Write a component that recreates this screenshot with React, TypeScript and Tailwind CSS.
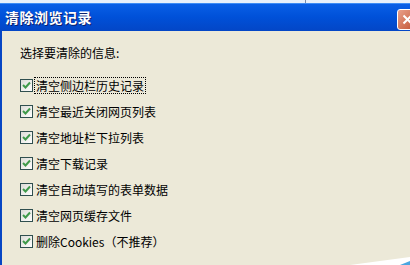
const items = [
  "清空侧边栏历史记录",
  "清空最近关闭网页列表",
  "清空地址栏下拉列表",
  "清空下载记录",
  "清空自动填写的表单数据",
  "清空网页缓存文件",
];

function Check({ focused = false, children }: { focused?: boolean; children: React.ReactNode }) {
  return (
    <div className="flex h-[26px] items-center">
      <span className="flex h-[13px] w-[13px] shrink-0 items-center justify-center border border-[#2f4f4f] bg-gradient-to-br from-[#dcdcd7] to-white">
        <svg width="9" height="9" viewBox="0 0 9 9">
          <path d="M1 4 L3.5 6.5 L8 1.5" fill="none" stroke="#3f9a4a" strokeWidth="2" />
        </svg>
      </span>
      <span
        className={
          "ml-[2px] px-[1px] leading-[15px] " +
          (focused ? "outline outline-1 outline-dotted outline-black" : "")
        }
      >
        {children}
      </span>
    </div>
  );
}

export default function App() {
  return (
    <div
      className="relative flex h-[265px] w-[410px] flex-col overflow-hidden bg-[#ece9d8] text-[12px] text-black"
      style={{ fontFamily: '"Noto Sans CJK SC", "Liberation Sans", sans-serif' }}
    >
      {/* strip above the window */}
      <div className="relative h-[3px] bg-[#e8f0fb]">
        <div className="absolute left-[305px] top-0 h-[3px] w-px bg-[#7a8aa8]" />
      </div>

      {/* title bar */}
      <div className="flex h-[28px] items-center justify-between border-t border-[#3d8cf5] bg-gradient-to-b from-[#0a5fe6] via-[#0050d8] to-[#0346c6] pl-[5px]">
        <span
          className="text-[14px] font-bold tracking-[0.5px] text-white"
          style={{ textShadow: "1px 1px 0 #0a1e6c" }}
        >
          清除浏览记录
        </span>
        <div className="mr-[-8px] mt-[4px] flex h-[21px] w-[21px] items-center justify-center rounded-[3px] border border-white bg-gradient-to-br from-[#e8a08a] to-[#c0502c]">
          <svg width="11" height="11" viewBox="0 0 11 11">
            <path d="M1.5 1.5 L9.5 9.5 M9.5 1.5 L1.5 9.5" stroke="#fff" strokeWidth="2" />
          </svg>
        </div>
      </div>

      {/* body */}
      <div className="flex flex-1 flex-col border-l-[2px] border-[#0746c4] pl-[18px] pt-[14px]">
        <div className="mb-[11px] leading-[16px]">选择要清除的信息:</div>
        <Check focused>{items[0]}</Check>
        {items.slice(1).map((t) => (
          <Check key={t}>{t}</Check>
        ))}
        <Check>删除Cookies（不推荐）</Check>
      </div>

      <svg className="absolute bottom-0 right-0" width="60" height="10" viewBox="0 0 60 10">
        <polygon points="0,10 60,2 60,10" fill="#ffffff" />
        <polygon points="50,10 60,6 60,10" fill="#4aa6e0" />
      </svg>
    </div>
  );
}
